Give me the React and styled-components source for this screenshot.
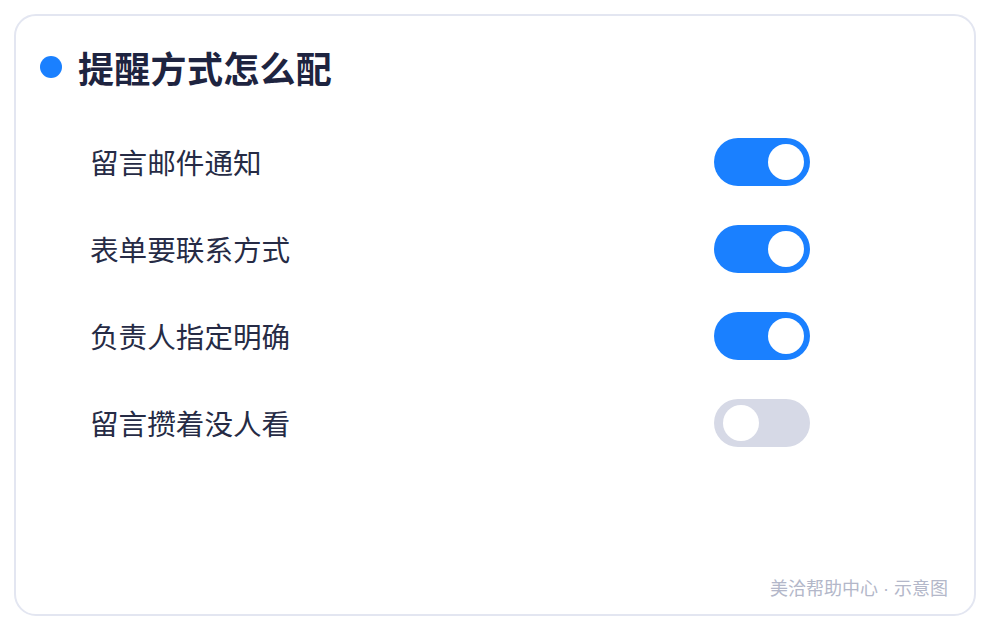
import React from "react";
import styled, { createGlobalStyle } from "styled-components";

const GlobalStyle = createGlobalStyle`
  html, body {
    margin: 0;
    padding: 0;
    background: #ffffff;
  }
  body {
    font-family: "Noto Sans CJK SC", "Noto Sans", sans-serif;
  }
`;

const items = [
  { label: "留言邮件通知", on: true },
  { label: "表单要联系方式", on: true },
  { label: "负责人指定明确", on: true },
  { label: "留言攒着没人看", on: false },
];

const App = () => {
  return (
    <>
      <GlobalStyle />
      <Page>
        <Card>
          <Header>
            <Dot />
            <Title>提醒方式怎么配</Title>
          </Header>
          <List>
            {items.map((item) => (
              <Row key={item.label}>
                <Label>{item.label}</Label>
                <Switch $on={item.on}>
                  <Knob $on={item.on} />
                </Switch>
              </Row>
            ))}
          </List>
          <Footer>美洽帮助中心 · 示意图</Footer>
        </Card>
      </Page>
    </>
  );
};

const Page = styled.div`
  padding: 14px;
  width: 990px;
  height: 630px;
  box-sizing: border-box;
`;

const Card = styled.div`
  box-sizing: border-box;
  width: 962px;
  height: 602px;
  border: 2px solid #e3e6f1;
  border-radius: 22px;
  background: #fff;
  padding: 24px 26px 14px 24px;
  display: flex;
  flex-direction: column;
`;

const Header = styled.div`
  display: flex;
  align-items: center;
  gap: 16px;
  height: 54px;
`;

const Dot = styled.span`
  width: 22px;
  height: 22px;
  border-radius: 50%;
  background: #1a80ff;
`;

const Title = styled.h1`
  margin: 0;
  font-size: 36px;
  font-weight: 700;
  color: #1e2440;
  letter-spacing: 0.3px;
`;

const List = styled.div`
  display: flex;
  flex-direction: column;
  width: 720px;
  margin: 24px 0 0 50px;
`;

const Row = styled.div`
  display: flex;
  align-items: center;
  justify-content: space-between;
  height: 87px;
`;

const Label = styled.span`
  font-size: 28.6px;
  color: #262b45;
`;

const Switch = styled.div`
  position: relative;
  width: 96px;
  height: 48px;
  border-radius: 24px;
  background: ${(p) => (p.$on ? "#1a80ff" : "#d6d9e6")};
`;

const Knob = styled.span`
  position: absolute;
  top: 6px;
  left: ${(p) => (p.$on ? "54px" : "9px")};
  width: 36px;
  height: 36px;
  border-radius: 50%;
  background: #fff;
`;

const Footer = styled.div`
  margin-top: auto;
  align-self: flex-end;
  font-family: "Liberation Sans", "Noto Sans CJK SC", sans-serif;
  font-size: 18px;
  color: #b3b7c9;
`;

export default App;
